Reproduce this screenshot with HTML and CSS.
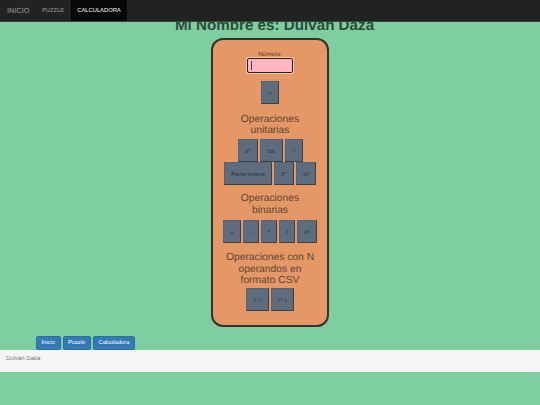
FILE: index.html
```html
<!DOCTYPE html>
<html lang="es">
<head>
<meta charset="utf-8">
<title>Calculadora</title>
<link rel="stylesheet" href="styles.css">
</head>
<body>
<nav class="navbar">
  <a class="brand" href="#">INICIO</a>
  <a class="nav-link" href="#">PUZZLE</a>
  <a class="nav-link active" href="#">CALCULADORA</a>
</nav>
<main class="content">
  <h1 class="title">Mi Nombre es: Dulvan Daza</h1>
  <section class="calc">
    <label class="field"><span>Número:</span><span class="input"><span class="caret"></span></span></label>
    <div class="row row-eq"><button class="key key-eq">=</button></div>
    <h2>Operaciones<br>unitarias</h2>
    <div class="row row-u1">
      <button class="key k-a">x²</button>
      <button class="key k-b">1/x</button>
      <button class="key k-c">√</button>
    </div>
    <div class="row row-u2">
      <button class="key k-d">Parte entera</button>
      <button class="key k-e">2ˣ</button>
      <button class="key k-f">n!</button>
    </div>
    <h2 class="h-bin">Operaciones<br>binarias</h2>
    <div class="row row-b">
      <button class="key k-g">+</button>
      <button class="key k-h">-</button>
      <button class="key k-h">*</button>
      <button class="key k-h">/</button>
      <button class="key k-i">xʸ</button>
    </div>
    <h2 class="h-csv">Operaciones con N<br>operandos en<br>formato CSV</h2>
    <div class="row row-c">
      <button class="key k-j">Σ x</button>
      <button class="key k-j">Π x</button>
    </div>
  </section>
  <div class="links">
    <a class="btn" href="#">Inicio</a>
    <a class="btn" href="#">Puzzle</a>
    <a class="btn" href="#">Calculadora</a>
  </div>
  <footer class="footer">Dulvan Daza</footer>
</main>
</body>
</html>
```
FILE: styles.css
```css
* { box-sizing: border-box; }
html, body { margin: 0; padding: 0; }
body {
  width: 540px;
  height: 405px;
  overflow: hidden;
  background: #7fcea0;
  font-family: "Liberation Sans", Arial, sans-serif;
  color: #333;
  text-rendering: geometricPrecision;
}
.navbar {
  position: absolute;
  top: 0;
  left: 0;
  width: 540px;
  height: 22px;
  display: flex;
  background: #222;
  border-bottom: 1px solid #2e4a3a;
  z-index: 2;
}
.navbar a { text-decoration: none; display: flex; align-items: center; }
.brand { padding: 0 6px 0 7px; font-size: 7.4px; color: #9d9d9d; width: 35px; }
.nav-link { padding: 0 7px; font-size: 5.8px; color: #9d9d9d; }
.nav-link.active { background: #080808; color: #fff; padding: 0 6px; width: 56px; }
.content { display: flex; flex-direction: column; align-items: center; padding-top: 16px; }
.title {
  margin: 0 0 0 9px;
  height: 22px;
  line-height: 19px;
  font-size: 15.2px;
  font-weight: bold;
  color: #2d4a3c;
  text-align: center;
}
.calc {
  width: 118px;
  height: 289px;
  background: #e59866;
  border: 2px solid #333;
  border-radius: 12px;
  display: flex;
  flex-direction: column;
  align-items: center;
  padding-top: 11px;
}
.field { display: flex; flex-direction: column; align-items: center; font-size: 6.2px; line-height: 7px; color: #5a3a28; }
.input {
  display: flex;
  align-items: center;
  width: 46px;
  height: 15px;
  padding-left: 3px;
  background: #ffb6c1;
  border: 1px solid #222;
  border-radius: 2px;
  box-shadow: 0 0 0 1px #f3c9a8;
}
.caret { width: 1px; height: 9px; background: #444; }
.row { display: flex; justify-content: center; gap: 2px; }
.row-eq { margin-top: 8px; }
.key {
  padding: 0;
  background: #5d6d7e;
  border: 1px solid #566372;
  border-right-color: #3a3f44;
  border-bottom: 1.5px solid #3a3f44;
  border-radius: 0;
  font-family: "Liberation Sans", Arial, sans-serif;
  font-size: 5.8px;
  font-weight: bold;
  color: #3a4048;
  height: 23px;
}
.key-eq { width: 18px; }
h2 {
  margin: 9.5px 0 0;
  font-size: 10.3px;
  line-height: 11.5px;
  font-weight: normal;
  color: #5c4536;
  text-align: center;
}
.row-u1 { margin-top: 2.5px; }
.row-u2 { margin-top: 0; }
.k-a { width: 20px; }
.k-b { width: 23px; }
.k-c { width: 18px; }
.k-d { width: 48px; }
.k-e { width: 20px; }
.k-f { width: 20px; }
.h-bin { margin-top: 8px; }
.row-b { margin-top: 4px; }
.k-g { width: 18px; }
.k-h { width: 16px; }
.k-i { width: 20px; }
.h-csv { margin-top: 9px; }
.row-c { margin-top: 1.5px; gap: 2px; }
.k-j { width: 23px; font-weight: normal; }
.links { align-self: flex-start; display: flex; gap: 2px; margin: 9px 0 0 36px; }
.btn {
  display: flex;
  align-items: center;
  height: 14px;
  padding: 0 4.5px;
  background: #337ab7;
  border: 1px solid #2e6da4;
  border-radius: 2px;
  color: #fff;
  font-size: 5.8px;
  text-decoration: none;
}
.footer {
  width: 540px;
  height: 22px;
  padding: 5px 6px;
  background: #f5f5f5;
  font-size: 6px;
  line-height: 8px;
  color: #777;
}
```
